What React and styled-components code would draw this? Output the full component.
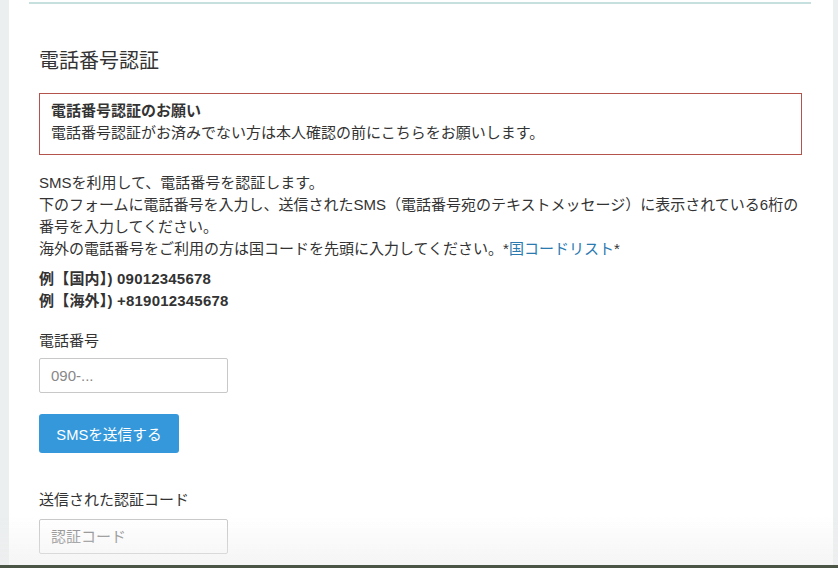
import styled, { createGlobalStyle } from "styled-components";

const GlobalStyle = createGlobalStyle`
  html, body {
    margin: 0;
    padding: 0;
    background: #eceff0;
  }
  body {
    font-family: "Liberation Sans", "Noto Sans CJK JP", sans-serif;
    color: #333;
    -webkit-font-smoothing: antialiased;
  }
`;

const App = () => {
    return (
        <>
            <GlobalStyle />
            <Panel>
                <TopRule />
                <Content>
                    <Heading>電話番号認証</Heading>
                    <Alert>
                        <AlertTitle>電話番号認証のお願い</AlertTitle>
                        <AlertText>電話番号認証がお済みでない方は本人確認の前にこちらをお願いします。</AlertText>
                    </Alert>
                    <Lead>
                        SMSを利用して、電話番号を認証します。<br />
                        下のフォームに電話番号を入力し、送信されたSMS（電話番号宛のテキストメッセージ）に表示されている6桁の番号を入力してください。<br />
                        海外の電話番号をご利用の方は国コードを先頭に入力してください。*<LinkText href="#">国コードリスト</LinkText>*
                    </Lead>
                    <Examples>
                        <div>例【国内】) 09012345678</div>
                        <div>例【海外】) +819012345678</div>
                    </Examples>
                    <Field>
                        <Label>電話番号</Label>
                        <Input placeholder="090-..." />
                    </Field>
                    <SendButton>SMSを送信する</SendButton>
                    <Field $top={36}>
                        <Label $gap={8}>送信された認証コード</Label>
                        <Input placeholder="認証コード" />
                    </Field>
                </Content>
            </Panel>
            <BottomFade />
            <BottomBar />
        </>
    );
};

const Panel = styled.div`
  margin-left: 9px;
  width: 824px;
  min-height: 568px;
  background: #fff;
  padding-top: 2px;
  box-sizing: border-box;
`;

const TopRule = styled.div`
  height: 1.5px;
  margin: 0 22px 0 20px;
  background: #c6dfdf;
`;

const Content = styled.div`
  padding: 0 31px 0 30px;
  display: flex;
  flex-direction: column;
  align-items: flex-start;
`;

const Heading = styled.h2`
  margin: 43px 0 0;
  font-size: 20px;
  line-height: 28px;
  font-weight: 400;
  color: #333;
`;

const Alert = styled.div`
  margin-top: 18px;
  align-self: stretch;
  border: 1px solid #b4524c;
  padding: 6px 11px 10px;
  font-size: 15px;
  line-height: 22px;
`;

const AlertTitle = styled.div`
  font-weight: 700;
`;

const AlertText = styled.div``;

const Lead = styled.p`
  margin: 17px 0 0;
  font-size: 15px;
  line-height: 22.3px;
  color: #333;
`;

const LinkText = styled.a`
  color: #2a7ab0;
  text-decoration: none;
`;

const Examples = styled.div`
  margin-top: 7px;
  font-size: 15px;
  line-height: 22px;
  font-weight: 700;
  letter-spacing: 0.2px;
`;

const Field = styled.div`
  margin-top: ${p => p.$top || 18}px;
  display: flex;
  flex-direction: column;
`;

const Label = styled.label`
  font-size: 15px;
  line-height: 22px;
  margin-bottom: ${p => p.$gap || 6}px;
`;

const Input = styled.input`
  width: 189px;
  height: 35px;
  box-sizing: border-box;
  border: 1px solid #c8c8c8;
  border-radius: 2px;
  padding: 0 11px;
  font-family: inherit;
  font-size: 15px;
  color: #333;
  outline: none;
  &::placeholder {
    color: #888;
  }
`;

const SendButton = styled.button`
  margin-top: 21px;
  width: 140px;
  height: 39px;
  border: 0;
  border-radius: 3px;
  background: #3498db;
  color: #fff;
  font-family: inherit;
  font-size: 14.7px;
  cursor: pointer;
`;

const BottomFade = styled.div`
  position: fixed;
  left: 0;
  right: 0;
  bottom: 3px;
  height: 48px;
  background: linear-gradient(rgba(240, 240, 240, 0), rgba(238, 238, 238, 0.6));
  pointer-events: none;
`;

const BottomBar = styled.div`
  position: fixed;
  left: 0;
  right: 0;
  bottom: 0;
  height: 3px;
  background: #4a5545;
`;

export default App
